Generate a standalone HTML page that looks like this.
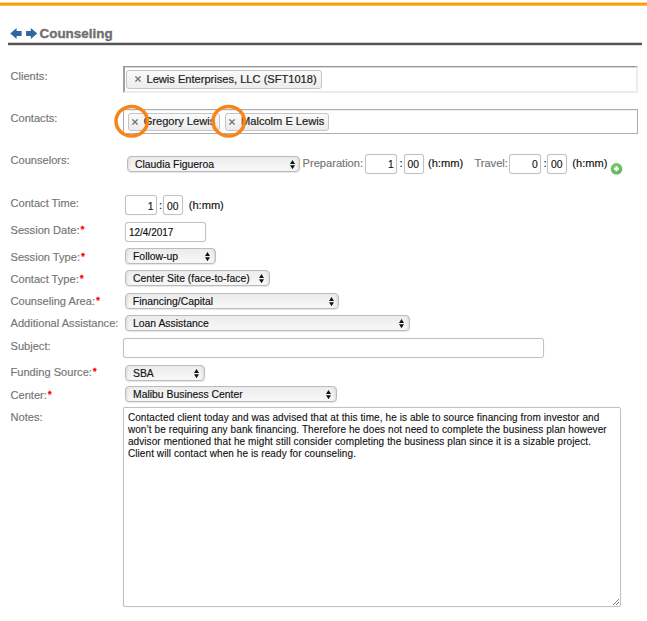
<!DOCTYPE html>
<html><head><meta charset="utf-8">
<style>
html,body{margin:0;padding:0;background:#fff;width:647px;height:621px;overflow:hidden;position:relative;font-family:"Liberation Sans",sans-serif;}
.a{position:absolute;white-space:nowrap;}
.lbl{position:absolute;left:10.5px;font-size:11.1px;line-height:13px;color:#747474;-webkit-text-stroke:0.15px #747474;white-space:nowrap;}
.req{color:#f00;font-size:9px;font-weight:bold;position:relative;top:-1.8px;margin-left:1.2px;-webkit-text-stroke:0.3px #f00;}
.sel{position:absolute;box-sizing:border-box;height:16px;border:1px solid #bcbcbc;border-radius:4px;background:linear-gradient(#ececec,#f3f3f3 60%,#f8f8f8);font-size:10.4px;color:#111;-webkit-text-stroke:0.15px #111;line-height:15px;padding-left:7px;white-space:nowrap;box-shadow:0 1px 1px rgba(0,0,0,.10), inset 3px 0 3px -2px rgba(0,0,0,.10), inset -3px 0 3px -2px rgba(0,0,0,.10);}
.sel .ar{position:absolute;right:4.4px;top:3px;width:5px;height:9.2px;}
.inp{position:absolute;box-sizing:border-box;border:1px solid #c2c2c2;box-shadow:0 0 1px rgba(0,0,0,.18);border-radius:3px;background:#fff;font-size:10.5px;color:#111;white-space:nowrap;}
.txt{position:absolute;font-size:11.1px;color:#111;-webkit-text-stroke:0.15px #111;white-space:nowrap;line-height:13px;}
.tag{position:absolute;box-sizing:border-box;border:1px solid #c5c5c5;border-radius:3px;background:linear-gradient(#fafafa,#ececec);font-size:11.1px;color:#222;-webkit-text-stroke:0.2px #222;white-space:nowrap;line-height:15px;}
.tag .x{position:absolute;color:#707070;font-size:10.5px;font-weight:bold;-webkit-text-stroke:0;}
</style></head><body>
<div class="a" style="left:0;top:2px;width:647px;height:4px;background:linear-gradient(to bottom,rgba(255,157,0,.35) 0,rgba(255,157,0,.35) 1px,#ff9c00 1px,#ff9c00 3px,rgba(255,160,10,.7) 3px,rgba(255,160,10,.7) 4px)"></div>

<svg class="a" style="left:0;top:0" width="45" height="50" viewBox="0 0 45 50">
<path d="M10.3 33.5 L16.6 27.9 L16.6 31.1 L21.6 31.1 L21.6 35.9 L16.6 35.9 L16.6 39.1 Z" fill="#2f67a0"/>
<path d="M37.3 33.5 L30.8 27.9 L30.8 31.1 L26.1 31.1 L26.1 35.9 L30.8 35.9 L30.8 39.1 Z" fill="#2f67a0"/>
</svg>
<div class="a" style="left:39.5px;top:26.2px;font-size:13.45px;font-weight:bold;color:#6e6e6e;-webkit-text-stroke:0.35px #6e6e6e;line-height:15px">Counseling</div>
<div class="a" style="left:8px;top:43px;width:634px;height:2px;background:#555;box-shadow:0 -1px 0 rgba(85,85,85,.3),0 1px 0 rgba(85,85,85,.2)"></div>

<div class="lbl" style="top:70px">Clients:</div>
<div class="lbl" style="top:112px">Contacts:</div>
<div class="lbl" style="top:153.5px">Counselors:</div>
<div class="lbl" style="top:197px">Contact Time:</div>
<div class="lbl" style="top:224px">Session Date:<span class="req">*</span></div>
<div class="lbl" style="top:250.5px">Session Type:<span class="req">*</span></div>
<div class="lbl" style="top:272.5px">Contact Type:<span class="req">*</span></div>
<div class="lbl" style="top:295px">Counseling Area:<span class="req">*</span></div>
<div class="lbl" style="top:317px">Additional Assistance:</div>
<div class="lbl" style="top:340px">Subject:</div>
<div class="lbl" style="top:366px">Funding Source:<span class="req">*</span></div>
<div class="lbl" style="top:388.5px">Center:<span class="req">*</span></div>
<div class="lbl" style="top:410.5px">Notes:</div>

<!-- Clients box -->
<div class="a" style="left:123px;top:66px;width:515px;height:27px;box-sizing:border-box;border-top:1px solid #969696;border-left:2px solid #a0a0a0;box-shadow:inset 0 1px 0 #d8d8d8;border-right:2px solid #ececec;border-bottom:2px solid #ececec;background:#fff"></div>
<div class="tag" style="left:126.2px;top:70px;width:195.8px;height:18.8px"><span style="position:absolute;left:19.3px;top:0.8px">Lewis Enterprises, LLC (SFT1018)</span></div>

<!-- Contacts box -->
<div class="a" style="left:123px;top:109px;width:515px;height:25px;box-sizing:border-box;border:1px solid #adadad;box-shadow:inset 0 1px 1px rgba(0,0,0,.07);background:#fff"></div>
<div class="tag" style="left:128.4px;top:112.5px;width:91.5px;height:18px"><span style="position:absolute;left:14.3px;top:0">Gregory Lewis</span></div>
<div class="tag" style="left:225px;top:112.5px;width:103.8px;height:18px"><span style="position:absolute;left:15px;top:0">Malcolm E Lewis</span></div>
<svg class="a" style="left:134.8px;top:75.9px" width="6" height="6" viewBox="0 0 6 6"><path d="M0.4 0.4 L5.6 5.6 M5.6 0.4 L0.4 5.6" stroke="#747474" stroke-width="1.35"/></svg>
<svg class="a" style="left:132.3px;top:118.6px" width="6" height="6" viewBox="0 0 6 6"><path d="M0.4 0.4 L5.6 5.6 M5.6 0.4 L0.4 5.6" stroke="#747474" stroke-width="1.35"/></svg>
<svg class="a" style="left:228.6px;top:118.6px" width="6" height="6" viewBox="0 0 6 6"><path d="M0.4 0.4 L5.6 5.6 M5.6 0.4 L0.4 5.6" stroke="#747474" stroke-width="1.35"/></svg>
<svg class="a" style="left:0;top:0" width="647" height="200">
<ellipse cx="131.7" cy="121.3" rx="15.7" ry="14.8" fill="none" stroke="#f8841a" stroke-width="3.5"/>
<ellipse cx="228.7" cy="121.3" rx="15.7" ry="14.8" fill="none" stroke="#f8841a" stroke-width="3.5"/>
</svg>

<!-- Counselors -->
<div class="sel" style="left:127px;top:156px;width:173px;">Claudia Figueroa<svg class="ar" viewBox="0 0 5 9.2"><path d="M0 3.9 L2.5 0 L5 3.9Z M0 5.3 L2.5 9.2 L5 5.3Z" fill="#111"/></svg></div>
<div class="lbl" style="left:302.6px;top:157px">Preparation:</div>
<div class="inp" style="left:365px;top:154px;width:32px;height:20px"></div>
<div class="txt" style="left:388px;top:157.6px;font-size:10.3px">1</div>
<div class="txt" style="left:399.5px;top:157px">:</div>
<div class="inp" style="left:404px;top:154px;width:20px;height:20px"></div>
<div class="txt" style="left:407.6px;top:157.6px;font-size:10.3px">00</div>
<div class="txt" style="left:428px;top:157px">(h:mm)</div>
<div class="lbl" style="left:474.4px;top:157px">Travel:</div>
<div class="inp" style="left:509px;top:154px;width:32px;height:20px"></div>
<div class="txt" style="left:532px;top:157.6px;font-size:10.3px">0</div>
<div class="txt" style="left:543.5px;top:157px">:</div>
<div class="inp" style="left:547px;top:154px;width:20px;height:20px"></div>
<div class="txt" style="left:551px;top:157.6px;font-size:10.3px">00</div>
<div class="txt" style="left:572.3px;top:157px">(h:mm)</div>
<svg class="a" style="left:610px;top:162px" width="13" height="13" viewBox="0 0 13 13">
<defs><radialGradient id="g" cx="0.45" cy="0.4" r="0.65"><stop offset="0" stop-color="#7fcb72"/><stop offset="0.75" stop-color="#5cb552"/><stop offset="1" stop-color="#4aa544"/></radialGradient></defs>
<circle cx="6.5" cy="6.8" r="5.8" fill="url(#g)"/>
<circle cx="6.5" cy="6.8" r="4.6" fill="none" stroke="#9ad891" stroke-width="0.6" opacity="0.6"/>
<path d="M3.9 6.8 H9.1 M6.5 4.3 V9.3" stroke="#fff" stroke-width="2"/>
</svg>

<!-- Contact time -->
<div class="inp" style="left:125px;top:195px;width:32px;height:20px"></div>
<div class="txt" style="left:147.8px;top:199.6px;font-size:10.3px">1</div>
<div class="txt" style="left:159px;top:199px">:</div>
<div class="inp" style="left:163px;top:195px;width:20px;height:20px"></div>
<div class="txt" style="left:167px;top:199.6px;font-size:10.3px">00</div>
<div class="txt" style="left:188.7px;top:199px">(h:mm)</div>

<!-- Session date -->
<div class="inp" style="left:125px;top:222px;width:81px;height:20px"></div>
<div class="a" style="left:128.9px;top:226.5px;font-size:10px;color:#111;-webkit-text-stroke:0.15px #111;line-height:12px">12/4/2017</div>

<div class="sel" style="left:125px;top:248px;width:90.6px;">Follow-up<svg class="ar" viewBox="0 0 5 9.2"><path d="M0 3.9 L2.5 0 L5 3.9Z M0 5.3 L2.5 9.2 L5 5.3Z" fill="#111"/></svg></div>
<div class="sel" style="left:125px;top:270px;width:144.5px;">Center Site (face-to-face)<svg class="ar" viewBox="0 0 5 9.2"><path d="M0 3.9 L2.5 0 L5 3.9Z M0 5.3 L2.5 9.2 L5 5.3Z" fill="#111"/></svg></div>
<div class="sel" style="left:124.8px;top:293px;width:214.5px;">Financing/Capital<svg class="ar" viewBox="0 0 5 9.2"><path d="M0 3.9 L2.5 0 L5 3.9Z M0 5.3 L2.5 9.2 L5 5.3Z" fill="#111"/></svg></div>
<div class="sel" style="left:125px;top:315px;width:284.8px;">Loan Assistance<svg class="ar" viewBox="0 0 5 9.2"><path d="M0 3.9 L2.5 0 L5 3.9Z M0 5.3 L2.5 9.2 L5 5.3Z" fill="#111"/></svg></div>
<div class="inp" style="left:123px;top:338px;width:421px;height:20px"></div>
<div class="sel" style="left:125px;top:365px;width:79.6px;">SBA<svg class="ar" viewBox="0 0 5 9.2"><path d="M0 3.9 L2.5 0 L5 3.9Z M0 5.3 L2.5 9.2 L5 5.3Z" fill="#111"/></svg></div>
<div class="sel" style="left:125px;top:386.3px;width:211.6px;">Malibu Business Center<svg class="ar" viewBox="0 0 5 9.2"><path d="M0 3.9 L2.5 0 L5 3.9Z M0 5.3 L2.5 9.2 L5 5.3Z" fill="#111"/></svg></div>

<!-- Notes -->
<div class="inp" style="left:123px;top:407px;width:498px;height:200px;border-radius:2px"></div>
<div class="a" style="left:127.9px;top:412.2px;font-size:10px;letter-spacing:0.09px;line-height:11.95px;color:#111;-webkit-text-stroke:0.12px #111;white-space:pre">Contacted client today and was advised that at this time, he is able to source financing from investor and
won’t be requiring any bank financing. Therefore he does not need to complete the business plan however
advisor mentioned that he might still consider completing the business plan since it is a sizable project.
Client will contact when he is ready for counseling.</div>
<svg class="a" style="left:611px;top:597px" width="9" height="9" viewBox="0 0 9 9"><path d="M2 8 L8 2 M5 8 L8 5" stroke="#777" stroke-width="0.9"/></svg>
</body></html>
